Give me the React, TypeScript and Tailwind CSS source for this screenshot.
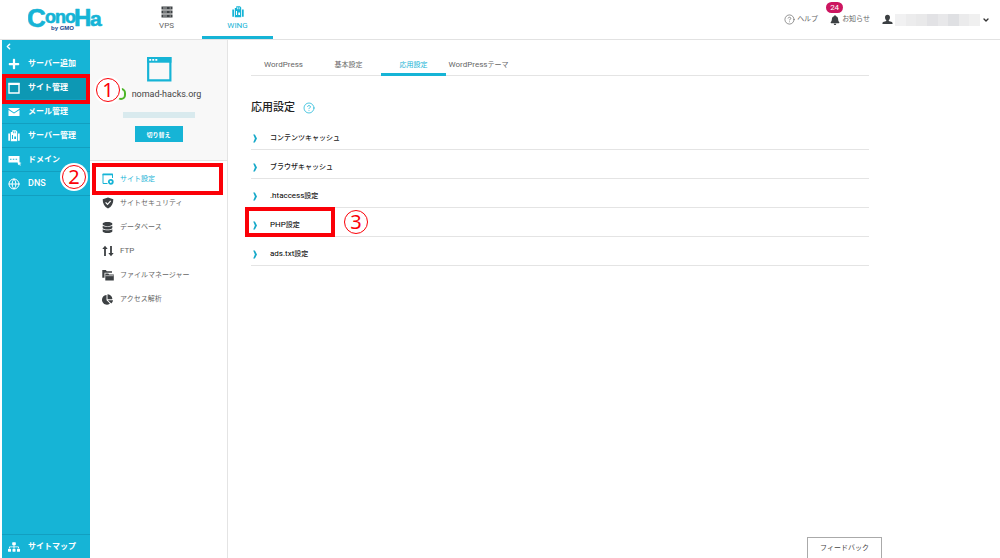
import type { ReactNode } from 'react';
import { ChevronDown, ChevronLeft, Globe, CircleHelp } from 'lucide-react';
import { FaBell, FaChartPie, FaDatabase, FaPlus, FaSitemap } from 'react-icons/fa';
import clsx from 'clsx';

// ── Icons ─────────────────────────────────────────────────────────────────────
function WindowIcon({ className }: { className?: string }) {
  return (
    <svg viewBox="0 0 24 24" className={className} fill="none" aria-hidden="true">
      <path d="M2 2h20.500v20.500H2z" stroke="currentColor" strokeWidth="2" />
      <path d="M1 1h22.500v5.200H1z" fill="currentColor" />
      <path d="M3 3.600h1.800M5.800 3.600h1.800M8.600 3.600h1.800" stroke="white" strokeWidth="1.500" />
    </svg>
  );
}

function BoxIcon() {
  return (
    <svg viewBox="0 0 12 12" className="w-3 h-3" fill="none" aria-hidden="true">
      <path d="M1 1.5h10v9.5H1z" stroke="currentColor" strokeWidth="1.4" />
      <path d="M.5 1h11v2H.5z" fill="currentColor" />
    </svg>
  );
}

function MailIcon() {
  return (
    <svg viewBox="0 0 12 12" className="w-3 h-3" fill="currentColor" aria-hidden="true">
      <path d="M.5 2h11v.8L6 6.4.5 2.8zM.5 4l5.500 3.600L11.500 4v6H.5z" />
    </svg>
  );
}

function WingIcon({ className }: { className?: string }) {
  return (
    <svg viewBox="0 0 12 12" className={className} fill="currentColor" aria-hidden="true">
      <path d="M.3 3.500h1.700v7.300H.3zM10 3.500h1.700v7.300H10z" />
      <path fillRule="evenodd" d="M2.800 2h1.500V.3h3.700L9.200 1.500v9.700H2.800zM5.300 1.300v1.900h.8V1.300zM6.800 1.300v1.900h.8V1.300zM4 5v4h1V5zM6.300 6.500v2.500h1.700V6.500z" />
    </svg>
  );
}

function DomainIcon() {
  return (
    <svg viewBox="0 0 14 12" className="w-3.5 h-3" fill="currentColor" aria-hidden="true">
      <path fillRule="evenodd" d="M.5 2h11v6.500H.5zM2 4.800v1h1.500v-1zM4.800 4.800v1h1.500v-1zM7.600 4.800v1h1.500v-1z" />
      <path d="M9.500 7.500l4 1.500-1.500.8.8 1.400-.8.5-.9-1.400-1 .9z" />
    </svg>
  );
}

function RackIcon() {
  return (
    <svg viewBox="0 0 12 12" className="w-3 h-3" fill="#3c4043" aria-hidden="true">
      <path d="M.5.500h11v3H.5zM.5 4.500h11v3H.5zM.5 8.500h11v3H.5z" />
      <path d="M2 2h4M8.500 2h1.500M2 6h4M8.500 6h1.500M2 10h4M8.500 10h1.500" stroke="white" strokeWidth=".6" />
    </svg>
  );
}

function PersonIcon() {
  return (
    <svg viewBox="0 0 12 12" className="w-[11px] h-[11px]" fill="#3c4043" aria-hidden="true">
      <path d="M6 .8c1.800 0 2.700 1.200 2.700 2.900 0 1.200-.5 2.200-1.300 2.900v1c1.900.6 4 1.100 4.100 2.200v1.200H.5V9.800c.1-1.100 2.200-1.600 4.100-2.200v-1C3.800 5.900 3.300 4.900 3.300 3.700 3.300 2 4.200.8 6 .8z" />
    </svg>
  );
}

function SiteSettingIcon() {
  return (
    <svg viewBox="0 0 12 12" className="w-3 h-3" fill="none" stroke="currentColor" aria-hidden="true">
      <path d="M5.500 10.500H1V1.200h9.500V5" strokeWidth="1" />
      <path d="M.5 1.500h10.500" strokeWidth="1.600" />
      <circle cx="8.800" cy="8.800" r="2" strokeWidth="1.800" />
    </svg>
  );
}

function ShieldIcon() {
  return (
    <svg viewBox="0 0 12 12" className="w-3 h-3" aria-hidden="true">
      <path d="M6 .5l5.300 1.700c.1 4.300-1.700 7.500-5.300 9.300C2.400 9.700.6 6.500.7 2.200z" fill="currentColor" />
      <path d="M3.600 5.400l1.900 1.900 3.200-3.400" stroke="white" strokeWidth="1.200" fill="none" />
    </svg>
  );
}

function TransferIcon() {
  return (
    <svg viewBox="0 0 12 12" className="w-3 h-3" fill="currentColor" aria-hidden="true">
      <path d="M3 .8L5.700 4H3.900v7H2.100V4H.3zM9 11.200L6.300 8h1.800V1h1.800v7h1.800z" />
    </svg>
  );
}

function FilesIcon() {
  return (
    <svg viewBox="0 0 12 12" className="w-3 h-3" fill="currentColor" aria-hidden="true">
      <path d="M.3 1h3.500l1 1.200h5.200v1.500H2.500v5H.3z" />
      <path d="M3.300 4.500h3l.8 1h4.700v6H3.300z" />
      <path d="M3.500 6.700h8" stroke="white" strokeWidth=".6" />
    </svg>
  );
}

function SectionArrow() {
  return (
    <svg viewBox="0 0 9 9" className="w-[9px] h-[9px]" fill="#16a9c9" aria-hidden="true">
      <path d="M2.200.5h1.700L6 4.500 3.900 8.500H2.200L3.900 4.500z" />
    </svg>
  );
}

// ── Data ──────────────────────────────────────────────────────────────────────
interface Item {
  label: string;
  icon: ReactNode;
  active?: boolean;
}

const SIDE_ITEMS: Item[] = [
  { label: 'サーバー追加', icon: <FaPlus size={12} /> },
  { label: 'サイト管理', icon: <BoxIcon />, active: true },
  { label: 'メール管理', icon: <MailIcon /> },
  { label: 'サーバー管理', icon: <WingIcon className="w-3 h-3" /> },
  { label: 'ドメイン', icon: <DomainIcon /> },
  { label: 'DNS', icon: <Globe size={12} /> },
];

const SITE_ITEMS: Item[] = [
  { label: 'サイト設定', icon: <SiteSettingIcon />, active: true },
  { label: 'サイトセキュリティ', icon: <ShieldIcon /> },
  { label: 'データベース', icon: <FaDatabase size={11} /> },
  { label: 'FTP', icon: <TransferIcon /> },
  { label: 'ファイルマネージャー', icon: <FilesIcon /> },
  { label: 'アクセス解析', icon: <FaChartPie size={11} /> },
];

const TABS = [
  { latin: 'WordPress', label: '' },
  { latin: '', label: '基本設定' },
  { latin: '', label: '応用設定', active: true },
  { latin: 'WordPress', label: 'テーマ' },
];

const SECTIONS = [
  { latin: '', label: 'コンテンツキャッシュ' },
  { latin: '', label: 'ブラウザキャッシュ' },
  { latin: '.htaccess', label: '設定' },
  { latin: 'PHP', label: '設定', marked: true },
  { latin: 'ads.txt', label: '設定' },
];

const MOSAIC = ['bg-[#f1f1f2]', 'bg-[#ececed]', 'bg-[#e9e9ea]', 'bg-[#e2e2e5]', 'bg-[#e8e8ea]', 'bg-[#dfe0e3]', 'bg-[#ebebec]', 'bg-[#f0f0f0]'];

// ── Annotations ───────────────────────────────────────────────────────────────
function Frame({ className }: { className?: string }) {
  return <span className={clsx('absolute z-10 border-4 border-[#fb0007] pointer-events-none', className)} />;
}

function Marker({ n, className }: { n: number; className?: string }) {
  return (
    <span className={clsx("absolute z-20 w-6 h-6 rounded-full border border-[#fb0007] bg-white ring-2 ring-white text-[#fb0007] text-xl font-normal font-['Noto_Sans',sans-serif] flex items-center justify-center", className)}>
      {n}
    </span>
  );
}

function Logo() {
  return (
    <svg viewBox="0 0 80 38" className="w-20 h-[38px]" role="img" aria-label="ConoHa by GMO">
      <g fill="#16b4d6" stroke="#16b4d6" strokeWidth=".6" strokeLinejoin="round" fontFamily="Liberation Sans, sans-serif" fontWeight="700">
        <text x="-1" y="27" fontSize="26">C</text>
        <text x="17" y="23" fontSize="18">o</text>
        <text x="27" y="23" fontSize="18">n</text>
        <text x="37" y="23" fontSize="18">o</text>
        <text x="46" y="26" fontSize="24">H</text>
        <text x="62" y="26" fontSize="21">a</text>
      </g>
      <text x="23" y="30" fontSize="6" fontWeight="700" fill="#14428c" fontFamily="Liberation Sans, sans-serif">by GMO</text>
    </svg>
  );
}

export default function App() {
  return (
    <div className="flex flex-col min-h-screen bg-white text-[#666] font-['Roboto','Noto_Sans_CJK_JP',sans-serif]">

      {/* ── Header ────────────────────────────────────────────────────────── */}
      <header className="flex h-10 border-b border-[#e2e2e2]">
        <a href="#home" className="w-[131px] pl-7">
          <Logo />
        </a>
        <nav className="flex text-[8px] leading-3">
          <a href="#vps" className="w-[71px] pt-1.5 flex flex-col items-center">
            <RackIcon />
            <span className="mt-0.5">VPS</span>
          </a>
          <a href="#wing" className="w-[71px] h-[39px] pt-1.5 flex flex-col items-center border-b-3 border-[#16b4d6] text-[#16b4d6]">
            <WingIcon className="w-3 h-3" />
            <span className="mt-0.5">WING</span>
          </a>
        </nav>
        <div className="ml-auto pr-2.5 flex items-center text-[7px]">
          <a href="#help" className="flex items-center gap-0.5">
            <CircleHelp size={11} strokeWidth={1.5} />
            ヘルプ
          </a>
          <a href="#news" className="relative ml-3 flex items-center gap-0.5">
            <FaBell size={10} color="#3c4043" />
            お知らせ
            <span className="absolute -left-1 -top-3 w-[17px] h-[11px] rounded-full bg-[#cc1560] text-white text-[8px] leading-[11px] text-center">24</span>
          </a>
          <button className="ml-3 flex items-center gap-0.5" aria-label="アカウント">
            <PersonIcon />
            <span className="flex w-[85px] h-3">
              {MOSAIC.map(c => <span key={c} className={clsx('flex-1', c)} />)}
            </span>
            <ChevronDown size={8} strokeWidth={4} color="#333" />
          </button>
        </div>
      </header>

      <div className="flex-1 flex">

        {/* ── Service menu ────────────────────────────────────────────────── */}
        <nav className="ml-0.5 w-[88px] flex flex-col bg-[#16b4d6] text-white text-[8px] font-bold">
          <button className="h-3 pl-0.5 flex items-center" aria-label="メニューを閉じる">
            <ChevronLeft size={9} strokeWidth={4} />
          </button>
          {SIDE_ITEMS.map(item => (
            <div key={item.label} className="relative">
              <a href="#menu" className={clsx('h-6 pl-1.5 flex items-center gap-2 border-b border-[#129fc0]', item.active && 'bg-[#0d98b4]', item.label === 'DNS' && 'text-[9px] font-medium')}>
                <span className="w-3">{item.icon}</span>
                {item.label}
              </a>
              {item.active && <Frame className="inset-x-0 -top-0.5 -bottom-1" />}
              {item.active && <Marker n={1} className="left-[94px] top-0.5" />}
            </div>
          ))}
          <a href="#sitemap" className="mt-auto h-6 pl-1.5 flex items-center gap-2 border-t border-[#129fc0]">
            <FaSitemap size={12} />
            サイトマップ
          </a>
        </nav>

        {/* ── Site menu ───────────────────────────────────────────────────── */}
        <aside className="w-[138px] border-r border-[#e4e4e4]">
          <div className="h-[121px] pt-4 flex flex-col items-center bg-[#f8f8f8] border-b border-[#e4e4e4]">
            <WindowIcon className="w-[26px] h-[26px] text-[#16b4d6]" />
            <div className="relative mt-1.5 pl-4 text-[9px] leading-3 text-[#444]">
              <span className="absolute left-0 top-0 w-2.5 h-3 rounded-full border-2 border-[#4db528]" />
              nomad-hacks.org
            </div>
            <span className="mt-3 w-[72px] h-1.5 bg-[#d9eaee]" />
            <button className="mt-2 w-12 h-4 bg-[#16b4d6] text-white text-[6px] font-bold">切り替え</button>
          </div>
          <nav className="pt-1.5 text-[7px]">
            {SITE_ITEMS.map(item => (
              <div key={item.label} className="relative">
                <a href="#site" className={clsx('h-6 pl-3 flex items-center gap-1.5', item.active && 'text-[#16b4d6]', item.label === 'FTP' && 'text-[8px]')}>
                  <span className={clsx('w-3', !item.active && 'text-[#3c4043]')}>{item.icon}</span>
                  {item.label}
                </a>
                {item.active && <Frame className="left-0.5 right-1 -top-1 -bottom-1" />}
                {item.active && <Marker n={2} className="-left-7 -top-0.5" />}
              </div>
            ))}
          </nav>
        </aside>

        {/* ── Settings ────────────────────────────────────────────────────── */}
        <main className="relative flex-1 pl-[23px] pr-[131px] pt-3">
          <div className="flex h-6 border-b border-[#e4e4e4] text-[7px]">
            {TABS.map(tab => (
              <button
                key={tab.latin + tab.label}
                className={clsx('w-[65px] h-6 pt-1 whitespace-nowrap border-b-3', tab.active ? 'border-[#16b4d6] text-[#16b4d6]' : 'border-transparent')}>
                <span className="text-[8px]">{tab.latin}</span>{tab.label}
              </button>
            ))}
          </div>
          <h1 className="mt-6 mb-[5px] flex items-center gap-2 text-[11px] leading-4 font-medium text-[#222]">
            応用設定
            <CircleHelp size={12} strokeWidth={1.5} color="#16b4d6" />
          </h1>
          {SECTIONS.map(section => (
            <div key={section.latin + section.label} className="relative">
              <button className="w-full h-[29px] pt-1.5 flex items-center gap-2.5 border-b border-[#e4e4e4] text-[7px] font-medium text-[#222]">
                <SectionArrow />
                <span><span className="text-[8px] font-normal text-black">{section.latin}</span>{section.label}</span>
              </button>
              {section.marked && <Frame className="-left-1.5 -top-px w-[90px] h-[30px]" />}
              {section.marked && <Marker n={3} className="left-[93px] top-0.5" />}
            </div>
          ))}
          <button className="absolute right-[118px] bottom-0 w-[75px] h-[21px] border border-b-0 border-[#aaa] text-[7px] text-[#444]">
            フィードバック
          </button>
        </main>
      </div>
    </div>
  );
}
